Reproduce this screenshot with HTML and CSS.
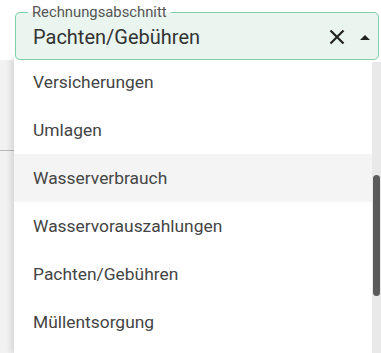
FILE: index.html
```html
<!DOCTYPE html>
<html lang="de">
<head>
  <meta charset="UTF-8" />
  <meta name="viewport" content="width=device-width, initial-scale=1.0"/>
  <title>Rechnungsabschnitt</title>
  <link rel="stylesheet" href="styles.css">
</head>
<body>

  <div class="page">
    <!-- Inhalt hinter dem Menü -->
    <div class="divider"></div>

    <!-- Auswahlfeld -->
    <fieldset class="field">
      <legend>Rechnungsabschnitt</legend>
      <span class="value">Pachten/Gebühren</span>
      <button class="clear" type="button" aria-label="Leeren">
        <svg width="16" height="16" viewBox="0 0 16 16">
          <path d="M1.5 1.5 L14.5 14.5 M14.5 1.5 L1.5 14.5" stroke="#222" stroke-width="2.2" fill="none"/>
        </svg>
      </button>
      <span class="arrow"></span>
    </fieldset>

    <!-- Dropdown -->
    <div class="menu">
      <ul class="options">
        <li>Versicherungen</li>
        <li>Umlagen</li>
        <li class="active">Wasserverbrauch</li>
        <li>Wasservorauszahlungen</li>
        <li>Pachten/Gebühren</li>
        <li>Müllentsorgung</li>
      </ul>
      <div class="scrollbar">
        <div class="thumb"></div>
      </div>
    </div>
  </div>

</body>
</html>
```

FILE: styles.css
```css
* {
  box-sizing: border-box;
}

body {
  margin: 0;
  font-family: Roboto, 'Noto Sans', sans-serif;
  background: #fff;
  color: #333;
}

.page {
  position: relative;
  width: 381px;
  height: 353px;
  overflow: hidden;
  background: #f2f2f2;
}

.page::before {
  content: "";
  position: absolute;
  top: 0;
  left: 0;
  right: 0;
  height: 60px;
  background: #fff;
}

.divider {
  position: absolute;
  top: 150px;
  left: 0;
  width: 100%;
  height: 1px;
  background: #b8b8b8;
}

.field {
  position: relative;
  z-index: 2;
  display: flex;
  align-items: center;
  height: 55px;
  margin: 5px 2px 0 15px;
  padding: 0 8px 4px 17px;
  border: 1.5px solid #80cfa9;
  border-radius: 5px;
  background: #eaf5ef;
}

.field legend {
  padding: 0 4px;
  margin-left: -5px;
  font-size: 14.8px;
  line-height: 14px;
  color: #555;
}

.value {
  flex: 1;
  font-size: 20px;
  color: #333;
}

.clear {
  display: flex;
  padding: 0;
  margin-right: 15px;
  border: none;
  background: none;
}

.arrow {
  width: 0;
  height: 0;
  border-left: 5px solid transparent;
  border-right: 5px solid transparent;
  border-bottom: 5px solid #222;
}

.menu {
  position: absolute;
  z-index: 1;
  top: 58px;
  left: 14px;
  right: 0;
  bottom: 0;
  display: flex;
  background: #fff;
  box-shadow: -3px 0 6px rgba(0, 0, 0, 0.12);
}

.options {
  flex: 1;
  margin: 0;
  padding: 0;
  list-style: none;
}

.options li {
  height: 48px;
  padding-left: 19px;
  display: flex;
  align-items: center;
  font-size: 17.4px;
  color: #444;
}

.options li.active {
  background: #f4f4f4;
}

.scrollbar {
  width: 9px;
  margin-top: 4px;
  background: #e9e9e9;
}

.thumb {
  width: 7px;
  height: 121px;
  margin: 113px 0 0 1px;
  border-radius: 4px;
  background: #5b5b5b;
}
```
